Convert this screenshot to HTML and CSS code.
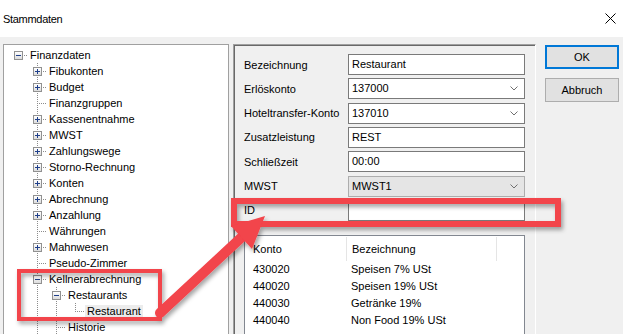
FILE: index.html
```html
<!DOCTYPE html>
<html lang="de">
<head>
    <meta charset="UTF-8">
    <meta name="viewport" content="width=device-width, initial-scale=1.0">
    <title>Stammdaten</title>
    <link rel="stylesheet" href="styles.css">
</head>
<body>
    <div class="window">
        <!-- Titelleiste -->
        <div class="titlebar">
            <span class="title">Stammdaten</span>
            <svg class="close" width="11" height="11" viewBox="0 0 11 11">
                <path d="M0.5 0.5L10.5 10.5M10.5 0.5L0.5 10.5" stroke="#000" stroke-width="1"/>
            </svg>
        </div>

        <div class="main">
            <!-- Baum links -->
            <div class="tree">
                <div class="row"><span class="c root"><span class="box minus"></span></span><span class="label">Finanzdaten</span></div>
                <div class="row"><span class="c sp"></span><span class="c tee"><span class="box plus"></span></span><span class="label">Fibukonten</span></div>
                <div class="row"><span class="c sp"></span><span class="c tee"><span class="box plus"></span></span><span class="label">Budget</span></div>
                <div class="row"><span class="c sp"></span><span class="c tee"></span><span class="label">Finanzgruppen</span></div>
                <div class="row"><span class="c sp"></span><span class="c tee"><span class="box plus"></span></span><span class="label">Kassenentnahme</span></div>
                <div class="row"><span class="c sp"></span><span class="c tee"><span class="box plus"></span></span><span class="label">MWST</span></div>
                <div class="row"><span class="c sp"></span><span class="c tee"><span class="box plus"></span></span><span class="label">Zahlungswege</span></div>
                <div class="row"><span class="c sp"></span><span class="c tee"><span class="box plus"></span></span><span class="label">Storno-Rechnung</span></div>
                <div class="row"><span class="c sp"></span><span class="c tee"><span class="box plus"></span></span><span class="label">Konten</span></div>
                <div class="row"><span class="c sp"></span><span class="c tee"><span class="box plus"></span></span><span class="label">Abrechnung</span></div>
                <div class="row"><span class="c sp"></span><span class="c tee"><span class="box plus"></span></span><span class="label">Anzahlung</span></div>
                <div class="row"><span class="c sp"></span><span class="c tee"></span><span class="label">Währungen</span></div>
                <div class="row"><span class="c sp"></span><span class="c tee"><span class="box plus"></span></span><span class="label">Mahnwesen</span></div>
                <div class="row"><span class="c sp"></span><span class="c tee"></span><span class="label">Pseudo-Zimmer</span></div>
                <div class="row"><span class="c sp"></span><span class="c tee"><span class="box minus"></span></span><span class="label">Kellnerabrechnung</span></div>
                <div class="row"><span class="c sp"></span><span class="c pipe"></span><span class="c tee"><span class="box minus"></span></span><span class="label">Restaurants</span></div>
                <div class="row"><span class="c sp"></span><span class="c pipe"></span><span class="c pipe"></span><span class="c elbow"></span><span class="label selected">Restaurant</span></div>
                <div class="row"><span class="c sp"></span><span class="c pipe"></span><span class="c tee"></span><span class="label">Historie</span></div>
                <div class="row"><span class="c sp"></span><span class="c pipe"></span><span class="c pipe"></span></div>
            </div>

            <!-- Eigenschaften rechts -->
            <div class="panel">
                <div class="form">
                    <span class="flabel">Bezeichnung</span>
                    <div class="field">Restaurant</div>

                    <span class="flabel">Erlöskonto</span>
                    <div class="field combo">137000<svg width="8" height="5" viewBox="0 0 8 5"><path d="M0.5 0.5L4 4L7.5 0.5" fill="none" stroke="#707070"/></svg></div>

                    <span class="flabel">Hoteltransfer-Konto</span>
                    <div class="field combo">137010<svg width="8" height="5" viewBox="0 0 8 5"><path d="M0.5 0.5L4 4L7.5 0.5" fill="none" stroke="#707070"/></svg></div>

                    <span class="flabel">Zusatzleistung</span>
                    <div class="field">REST</div>

                    <span class="flabel">Schließzeit</span>
                    <div class="field">00:00</div>

                    <span class="flabel">MWST</span>
                    <div class="field combo disabled">MWST1<svg width="8" height="5" viewBox="0 0 8 5"><path d="M0.5 0.5L4 4L7.5 0.5" fill="none" stroke="#707070"/></svg></div>

                    <span class="flabel">ID</span>
                    <div class="field"></div>
                </div>

                <div class="list">
                    <div class="lhead">
                        <span class="col1">Konto</span>
                        <span class="col2">Bezeichnung</span>
                    </div>
                    <div class="lrow"><span class="col1">430020</span><span class="col2">Speisen 7% USt</span></div>
                    <div class="lrow"><span class="col1">440020</span><span class="col2">Speisen 19% USt</span></div>
                    <div class="lrow"><span class="col1">440030</span><span class="col2">Getränke 19%</span></div>
                    <div class="lrow"><span class="col1">440040</span><span class="col2">Non Food 19% USt</span></div>
                </div>
            </div>

            <!-- Schaltflächen -->
            <div class="buttons">
                <button class="btn default">OK</button>
                <button class="btn">Abbruch</button>
            </div>
        </div>

        <!-- Markierungen (rote Rahmen und Pfeil) -->
        <svg class="marks" width="623" height="334" viewBox="0 0 623 334">
            <defs>
                <filter id="shadow" x="-20%" y="-20%" width="140%" height="160%">
                    <feDropShadow dx="2" dy="3" stdDeviation="2" flood-color="#000" flood-opacity="0.35"/>
                </filter>
            </defs>
            <g filter="url(#shadow)" fill="none" stroke="#f2444b">
                <rect x="19" y="271" width="141" height="48" stroke-width="4"/>
                <rect x="234" y="201" width="324" height="23" stroke-width="6"/>
                <line x1="160" y1="313" x2="243" y2="236" stroke-width="10" stroke-linecap="round"/>
                <polygon points="265,216 252,249 231,226" fill="#f2444b" stroke="none"/>
            </g>
        </svg>
    </div>
</body>
</html>
```

FILE: styles.css
```css
body {
    margin: 0;
    font-family: "Liberation Sans", Arial, sans-serif;
    font-size: 11px;
    color: #000;
}

.window {
    position: relative;
    width: 623px;
    height: 334px;
    overflow: hidden;
    background-color: #f0f0f0;
}

/* Titelleiste */
.titlebar {
    height: 37px;
    background-color: #fff;
    display: flex;
    align-items: center;
    justify-content: space-between;
    padding: 0 7px 0 3px;
    box-sizing: border-box;
}

.title {
    font-size: 11px;
    letter-spacing: -0.3px;
}

.main {
    display: flex;
    align-items: flex-start;
    padding: 7px 0 0 3px;
}

/* Baumansicht */
.tree {
    width: 226px;
    height: 300px;
    box-sizing: border-box;
    background-color: #fff;
    border: 1px solid #a0a0a0;
    padding: 2px 0 0 5px;
    flex: none;
}

.row {
    display: flex;
    align-items: center;
    height: 16px;
}

.c {
    width: 19px;
    height: 16px;
    flex: none;
    display: flex;
    align-items: center;
}

.c.root {
    background: repeating-linear-gradient(to right, #8c8c8c 0 1px, transparent 1px 2px) 11px 8px / 8px 1px no-repeat;
}

.c.tee {
    background:
        repeating-linear-gradient(to bottom, #8c8c8c 0 1px, transparent 1px 2px) 9px 0 / 1px 16px no-repeat,
        repeating-linear-gradient(to right, #8c8c8c 0 1px, transparent 1px 2px) 11px 8px / 8px 1px no-repeat;
}

.c.elbow {
    background:
        repeating-linear-gradient(to bottom, #8c8c8c 0 1px, transparent 1px 2px) 9px 0 / 1px 9px no-repeat,
        repeating-linear-gradient(to right, #8c8c8c 0 1px, transparent 1px 2px) 11px 8px / 8px 1px no-repeat;
}

.c.pipe {
    background: repeating-linear-gradient(to bottom, #8c8c8c 0 1px, transparent 1px 2px) 9px 0 / 1px 16px no-repeat;
}

.box {
    width: 9px;
    height: 9px;
    box-sizing: border-box;
    margin-left: 5px;
    border: 1px solid #919191;
}

.box.minus {
    background:
        linear-gradient(#1f3f8a, #1f3f8a) center / 5px 1px no-repeat,
        linear-gradient(#fff, #dcdcdc);
}

.box.plus {
    background:
        linear-gradient(#1f3f8a, #1f3f8a) center / 5px 1px no-repeat,
        linear-gradient(#1f3f8a, #1f3f8a) center / 1px 5px no-repeat,
        linear-gradient(#fff, #dcdcdc);
}

.label {
    padding: 0 2px;
    height: 13px;
    line-height: 13px;
    white-space: nowrap;
}

.label.selected {
    background-color: #ececec;
}

/* Eigenschaften */
.panel {
    width: 303px;
    height: 300px;
    box-sizing: border-box;
    margin-left: 4px;
    border-top: 1px solid #a0a0a0;
    border-left: 1px solid #a0a0a0;
    border-right: 1px solid #fff;
    box-shadow: inset 1px 1px 0 #696969;
    padding: 9px 10px 0 10px;
    flex: none;
}

.form {
    display: grid;
    grid-template-columns: 104px 1fr;
    row-gap: 3.33px;
    align-items: center;
}

.flabel {
    white-space: nowrap;
}

.field {
    height: 21px;
    box-sizing: border-box;
    border: 1px solid #7a7a7a;
    background-color: #fff;
    padding: 0 3px;
    line-height: 19px;
    display: flex;
    align-items: center;
    justify-content: space-between;
}

.field.combo svg {
    margin-right: 3px;
}

.field.disabled {
    background-color: #e5e5e5;
    border-color: #adadad;
}

.list {
    margin-top: 14px;
    height: 120px;
    background-color: #fff;
    border: 1px solid #828790;
}

.lhead {
    display: flex;
    height: 24px;
    align-items: center;
    margin-top: 1px;
}

.lhead span {
    height: 24px;
    line-height: 24px;
    border-right: 1px solid #e5e5e5;
}

.lrow {
    display: flex;
    height: 17px;
    line-height: 17px;
}

.col1 {
    width: 93px;
    padding-left: 8px;
    flex: none;
}

.col2 {
    width: 144px;
    padding-left: 5px;
    flex: none;
}

/* Schaltflächen */
.buttons {
    display: flex;
    flex-direction: column;
    gap: 9px;
    margin-left: 9px;
    padding-top: 1px;
}

.btn {
    width: 74px;
    height: 24px;
    font-family: "Liberation Sans", Arial, sans-serif;
    font-size: 11px;
    background-color: #e1e1e1;
    border: 1px solid #adadad;
    padding: 0;
    color: #000;
}

.btn.default {
    border: 2px solid #0078d7;
}

/* Markierungen */
.marks {
    position: absolute;
    top: 0;
    left: 0;
    pointer-events: none;
}
```
